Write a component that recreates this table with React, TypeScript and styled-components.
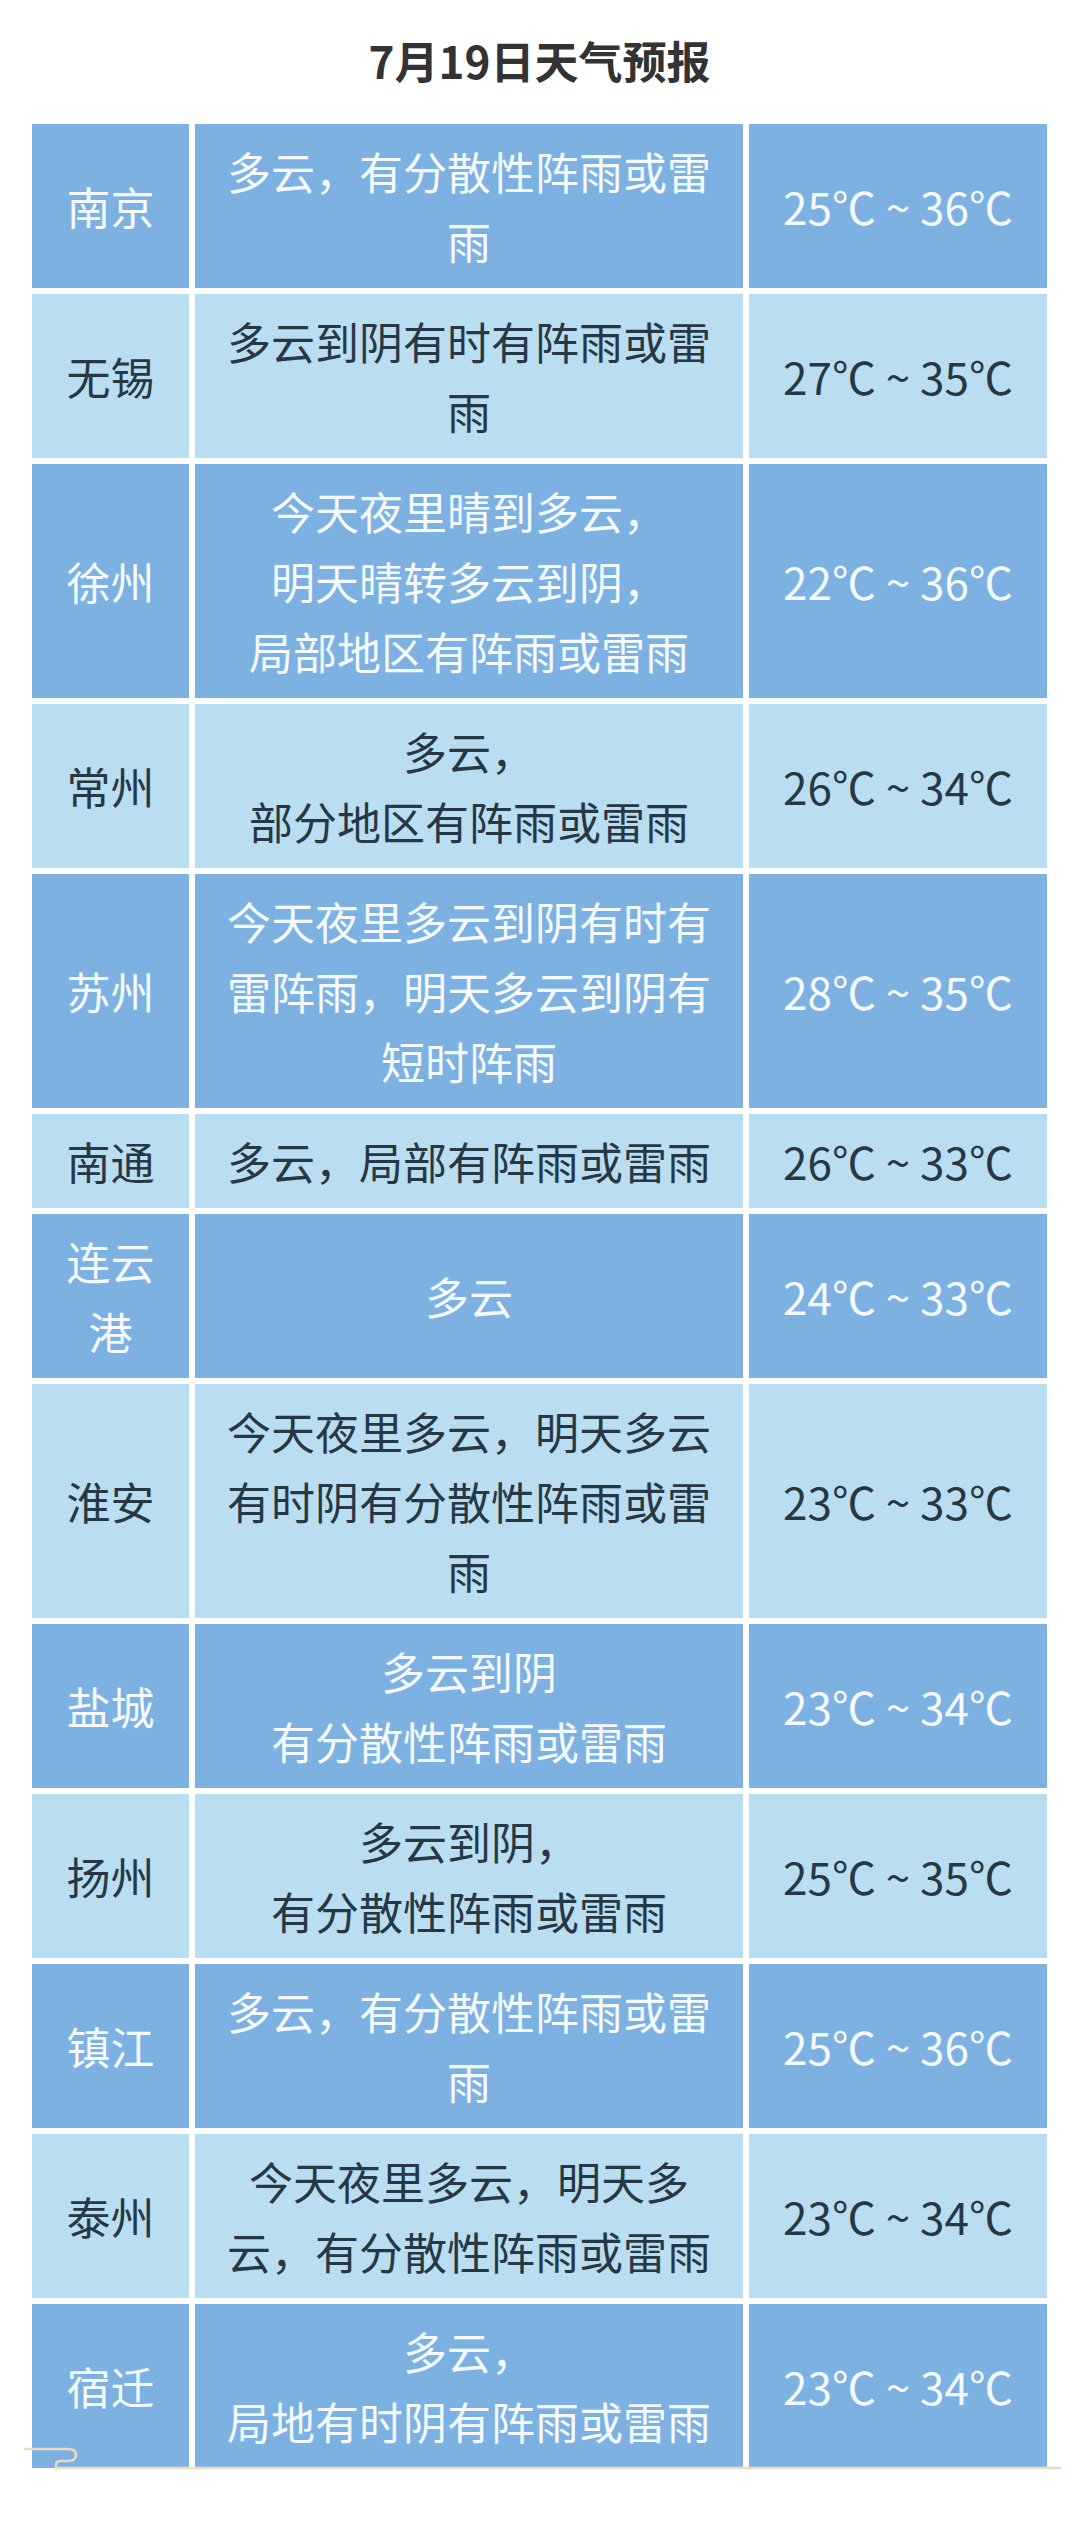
import React from 'react'
import styled, { createGlobalStyle } from 'styled-components'

type Row = {
  city: string
  desc: string | string[]
  temp: string
}

const rows: Row[] = [
  { city: '南京', desc: '多云，有分散性阵雨或雷雨', temp: '25℃ ~ 36℃' },
  { city: '无锡', desc: '多云到阴有时有阵雨或雷雨', temp: '27℃ ~ 35℃' },
  {
    city: '徐州',
    desc: ['今天夜里晴到多云，', '明天晴转多云到阴，', '局部地区有阵雨或雷雨'],
    temp: '22℃ ~ 36℃',
  },
  { city: '常州', desc: ['多云，', '部分地区有阵雨或雷雨'], temp: '26℃ ~ 34℃' },
  {
    city: '苏州',
    desc: '今天夜里多云到阴有时有雷阵雨，明天多云到阴有短时阵雨',
    temp: '28℃ ~ 35℃',
  },
  { city: '南通', desc: '多云，局部有阵雨或雷雨', temp: '26℃ ~ 33℃' },
  { city: '连云港', desc: '多云', temp: '24℃ ~ 33℃' },
  {
    city: '淮安',
    desc: '今天夜里多云，明天多云有时阴有分散性阵雨或雷雨',
    temp: '23℃ ~ 33℃',
  },
  { city: '盐城', desc: ['多云到阴', '有分散性阵雨或雷雨'], temp: '23℃ ~ 34℃' },
  { city: '扬州', desc: ['多云到阴，', '有分散性阵雨或雷雨'], temp: '25℃ ~ 35℃' },
  { city: '镇江', desc: '多云，有分散性阵雨或雷雨', temp: '25℃ ~ 36℃' },
  {
    city: '泰州',
    desc: '今天夜里多云，明天多云，有分散性阵雨或雷雨',
    temp: '23℃ ~ 34℃',
  },
  { city: '宿迁', desc: ['多云，', '局地有时阴有阵雨或雷雨'], temp: '23℃ ~ 34℃' },
]

const GlobalStyle = createGlobalStyle`
  body {
    margin: 0;
    background: #fff;
    font-family: "Noto Sans CJK SC", "Noto Sans", sans-serif;
  }
`

export default function App() {
  return (
    <>
      <GlobalStyle />
      <Page lang="zh-CN">
        <Title>7月19日天气预报</Title>
        <TableWrap>
          <Table>
            {rows.map((row, i) => {
              const dark = i % 2 === 0
              return (
                <TableRow key={row.city}>
                  <Cell $dark={dark}>{row.city}</Cell>
                  <Cell $dark={dark}>
                    {Array.isArray(row.desc)
                      ? row.desc.map((line, j) => (
                          <React.Fragment key={j}>
                            {j > 0 && <br />}
                            {line}
                          </React.Fragment>
                        ))
                      : row.desc}
                  </Cell>
                  <Cell $dark={dark}>{row.temp}</Cell>
                </TableRow>
              )
            })}
          </Table>
          <Curl width="1040" height="24" viewBox="0 0 1040 24">
            <path
              d="M1 2 H44 Q52 2 52 8 Q52 14 44 14 H36 Q32 14 32 18 V21 H1036"
              fill="none"
              stroke="#e9dcc0"
              strokeWidth="2.4"
              strokeLinecap="round"
            />
          </Curl>
        </TableWrap>
      </Page>
    </>
  )
}

const Page = styled.div`
  width: 1080px;
  min-height: 2528px;
  padding: 0 33px 0 32px;
  box-sizing: border-box;
`

const Title = styled.h1`
  margin: 0;
  padding: 25px 0 29px;
  font-size: 44px;
  line-height: 70px;
  font-weight: 700;
  color: #333;
  text-align: center;
`

const TableWrap = styled.div`
  position: relative;
`

const Table = styled.div`
  display: flex;
  flex-direction: column;
  gap: 6px;
`

const TableRow = styled.div`
  display: grid;
  grid-template-columns: 157px 548px 298px;
  column-gap: 6px;
`

const Cell = styled.div<{ $dark: boolean }>`
  display: flex;
  align-items: center;
  justify-content: center;
  padding: 12px 16px;
  font-size: 44px;
  line-height: 70px;
  text-align: center;
  background: ${(p) => (p.$dark ? '#7cb1e2' : '#b9def1')};
  color: ${(p) => (p.$dark ? '#f4f9fe' : '#283744')};
`

const Curl = styled.svg`
  position: absolute;
  left: -8px;
  bottom: -3px;
  pointer-events: none;
`
